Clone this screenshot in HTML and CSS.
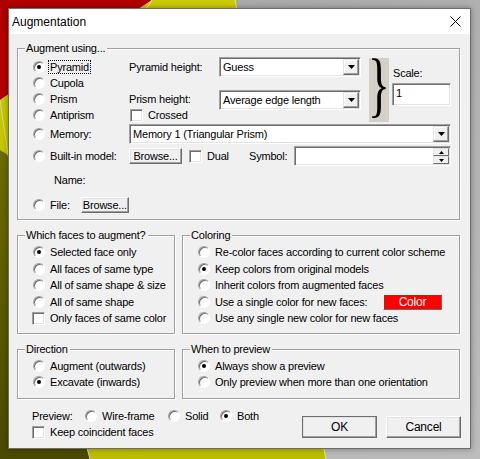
FILE: index.html
```html
<!DOCTYPE html>
<html lang="en">
<head>
    <meta charset="UTF-8">
    <title>Augmentation</title>
    <link rel="stylesheet" href="styles.css">
</head>
<body>

    <svg class="backdrop" width="480" height="459" viewBox="0 0 480 459">
        <defs>
            <linearGradient id="bgGray" x1="0" y1="0" x2="1" y2="1">
                <stop offset="0" stop-color="#a4a4a4"/>
                <stop offset="1" stop-color="#bcbcbc"/>
            </linearGradient>
            <linearGradient id="yellow" x1="0" y1="0" x2="0" y2="1">
                <stop offset="0" stop-color="#cccc00"/>
                <stop offset="1" stop-color="#bcbc00"/>
            </linearGradient>
            <linearGradient id="olive" x1="0" y1="0" x2="0" y2="1">
                <stop offset="0" stop-color="#6c6c00"/>
                <stop offset="1" stop-color="#4a4a00"/>
            </linearGradient>
        </defs>
        <rect width="480" height="459" fill="url(#bgGray)"/>
        <polygon points="0,0 152,0 0,100" fill="#b10000"/>
        <polygon points="152,0 235,0 326,459 90,459 8,155 0,150 0,100" fill="url(#yellow)"/>
        <polygon points="0,150 8,155 90,459 0,459" fill="url(#olive)"/>
        <polyline points="152,0 143,13" stroke="#e8e8a0" stroke-width="1" fill="none"/>
        <polyline points="0,100 8,155 90,459" stroke="#d8d890" stroke-width="1" fill="none"/>
        <polyline points="235,0 326,459" stroke="#e0e0c0" stroke-width="1" fill="none"/>
    </svg>

    <div class="window">
        <div class="titlebar">
            <span class="title">Augmentation</span>
            <svg class="close" width="11" height="11" viewBox="0 0 11 11">
                <path d="M0.5 0.5 L10.5 10.5 M10.5 0.5 L0.5 10.5" stroke="#000" stroke-width="1"/>
            </svg>
        </div>

        <div class="client">

            <!-- Augment using -->
            <div class="group using">
                <span class="cap">Augment using...</span>
                <div class="using-grid">
                    <div class="opt g-r1"><span class="radio on"></span><span class="focus">Pyramid</span></div>
                    <div class="opt g-r2"><span class="radio"></span><span>Cupola</span></div>
                    <div class="opt g-r3"><span class="radio"></span><span>Prism</span></div>
                    <div class="opt g-r4"><span class="radio"></span><span>Antiprism</span></div>
                    <div class="opt g-r5"><span class="radio"></span><span>Memory:</span></div>
                    <div class="opt g-r6"><span class="radio"></span><span>Built-in model:</span></div>
                    <div class="name-label">Name:</div>
                    <div class="opt g-r8">
                        <span class="radio"></span><span class="file-text">File:</span>
                        <span class="btn browse">Browse...</span>
                    </div>

                    <div class="lbl pyr-lbl">Pyramid height:</div>
                    <div class="combo pyr-combo">
                        <span class="val">Guess</span>
                        <span class="drop"><svg width="7" height="4" viewBox="0 0 7 4"><polygon points="0,0 7,0 3.5,4" fill="#000"/></svg></span>
                    </div>

                    <div class="lbl prism-lbl">Prism height:</div>
                    <div class="combo prism-combo">
                        <span class="val">Average edge length</span>
                        <span class="drop"><svg width="7" height="4" viewBox="0 0 7 4"><polygon points="0,0 7,0 3.5,4" fill="#000"/></svg></span>
                    </div>

                    <div class="opt crossed"><span class="check"></span><span>Crossed</span></div>

                    <div class="brace">
                        <svg width="20" height="64" viewBox="2 -70 44 90" preserveAspectRatio="none">
                            <text x="0" y="0" font-family="Liberation Serif, serif" font-size="100">}</text>
                        </svg>
                    </div>

                    <div class="scale">
                        <span>Scale:</span>
                        <div class="field scale-field">1</div>
                    </div>

                    <div class="combo mem-combo">
                        <span class="val">Memory 1 (Triangular Prism)</span>
                        <span class="drop"><svg width="7" height="4" viewBox="0 0 7 4"><polygon points="0,0 7,0 3.5,4" fill="#000"/></svg></span>
                    </div>

                    <div class="builtin">
                        <span class="btn browse">Browse...</span>
                        <span class="check dual-check"></span>
                        <span class="dual-text">Dual</span>
                        <span class="symbol-text">Symbol:</span>
                        <div class="field spin">
                            <span class="spin-btns">
                                <span class="spin-btn"><svg width="5" height="3" viewBox="0 0 5 3"><polygon points="0,3 5,3 2.5,0" fill="#000"/></svg></span>
                                <span class="spin-btn"><svg width="5" height="3" viewBox="0 0 5 3"><polygon points="0,0 5,0 2.5,3" fill="#000"/></svg></span>
                            </span>
                        </div>
                    </div>
                </div>
            </div>

            <div class="row2">
                <div class="group">
                    <span class="cap">Which faces to augment?</span>
                    <div class="list tall">
                        <div class="opt"><span class="radio on"></span><span>Selected face only</span></div>
                        <div class="opt"><span class="radio"></span><span>All faces of same type</span></div>
                        <div class="opt"><span class="radio"></span><span>All of same shape &amp; size</span></div>
                        <div class="opt"><span class="radio"></span><span>All of same shape</span></div>
                        <div class="opt"><span class="check"></span><span>Only faces of same color</span></div>
                    </div>
                </div>
                <div class="group">
                    <span class="cap">Coloring</span>
                    <div class="list tall">
                        <div class="opt"><span class="radio"></span><span>Re-color faces according to current color scheme</span></div>
                        <div class="opt"><span class="radio on"></span><span>Keep colors from original models</span></div>
                        <div class="opt"><span class="radio"></span><span>Inherit colors from augmented faces</span></div>
                        <div class="opt"><span class="radio"></span><span class="single-text">Use a single color for new faces:</span><span class="color-btn">Color</span></div>
                        <div class="opt"><span class="radio"></span><span>Use any single new color for new faces</span></div>
                    </div>
                </div>
            </div>

            <div class="row3">
                <div class="group">
                    <span class="cap">Direction</span>
                    <div class="list">
                        <div class="opt"><span class="radio"></span><span>Augment (outwards)</span></div>
                        <div class="opt"><span class="radio on"></span><span>Excavate (inwards)</span></div>
                    </div>
                </div>
                <div class="group">
                    <span class="cap">When to preview</span>
                    <div class="list">
                        <div class="opt"><span class="radio on"></span><span>Always show a preview</span></div>
                        <div class="opt"><span class="radio"></span><span>Only preview when more than one orientation</span></div>
                    </div>
                </div>
            </div>

            <div class="footer">
                <div class="footer-left">
                    <div class="preview-row">
                        <span class="preview-text">Preview:</span>
                        <div class="opt wire"><span class="radio"></span><span>Wire-frame</span></div>
                        <div class="opt solid"><span class="radio"></span><span>Solid</span></div>
                        <div class="opt"><span class="radio on"></span><span>Both</span></div>
                    </div>
                    <div class="opt"><span class="check"></span><span>Keep coincident faces</span></div>
                </div>
                <div class="buttons">
                    <span class="btn big default">OK</span>
                    <span class="btn big">Cancel</span>
                </div>
            </div>

        </div>
    </div>

</body>
</html>
```

FILE: styles.css
```css
body {
    margin: 0;
    width: 480px;
    height: 459px;
    overflow: hidden;
    position: relative;
    background-color: #adadad;
    font-family: "Liberation Sans", Arial, sans-serif;
    font-size: 11px;
    letter-spacing: -0.2px;
    color: #000;
}

.backdrop {
    position: absolute;
    left: 0;
    top: 0;
}

.window {
    position: relative;
    margin: 8px 0 0 8px;
    width: 463px;
    height: 441px;
    box-sizing: border-box;
    border: 1px solid #6d6d6d;
    background-color: #f0f0f0;
    box-shadow: 0 0 6px rgba(0, 0, 0, 0.35);
    display: flex;
    flex-direction: column;
}

.titlebar {
    height: 25px;
    flex: none;
    background-color: #fff;
    display: flex;
    align-items: center;
    justify-content: space-between;
    padding: 0 9px 0 3px;
}

.title {
    font-size: 12px;
    letter-spacing: 0;
}

.client {
    flex: 1;
    padding: 14px 10px 0 8px;
}

/* group boxes */
.group {
    position: relative;
    box-sizing: border-box;
    border: 1px solid #a0a0a0;
    box-shadow: 1px 1px 0 #fff, inset 1px 1px 0 #fff;
}

.cap {
    position: absolute;
    top: -7px;
    left: 7px;
    padding: 0 2px 0 1px;
    line-height: 13px;
    background-color: #f0f0f0;
}

.opt {
    display: flex;
    align-items: center;
    white-space: nowrap;
}

.radio {
    flex: none;
    position: relative;
    width: 12px;
    height: 12px;
    box-sizing: border-box;
    border-radius: 50%;
    border: 1px solid;
    border-color: #a0a0a0 #fff #fff #a0a0a0;
    background-color: #fff;
    box-shadow: inset 1px 1px 0 #6d6d6d;
    margin-right: 5px;
}

.radio.on::after {
    content: "";
    position: absolute;
    left: 3px;
    top: 3px;
    width: 4px;
    height: 4px;
    border-radius: 50%;
    background-color: #000;
}

.check {
    flex: none;
    width: 13px;
    height: 13px;
    box-sizing: border-box;
    border: 1px solid;
    border-color: #a0a0a0 #fff #fff #a0a0a0;
    background-color: #fff;
    box-shadow: inset 1px 1px 0 #6d6d6d, inset -1px -1px 0 #e3e3e3;
    margin-right: 5px;
}

.focus {
    outline: 1px dotted #000;
    padding: 0 1px;
    margin-left: -1px;
}

.btn {
    display: flex;
    align-items: center;
    justify-content: center;
    box-sizing: border-box;
    background-color: #f0f0f0;
    border: 1px solid;
    border-color: #fff #6d6d6d #6d6d6d #fff;
    box-shadow: inset -1px -1px 0 #a0a0a0, inset 1px 1px 0 #e3e3e3;
}

.field {
    box-sizing: border-box;
    background-color: #fff;
    border: 1px solid;
    border-color: #a0a0a0 #fff #fff #a0a0a0;
    box-shadow: inset 1px 1px 0 #6d6d6d, inset -1px -1px 0 #e3e3e3;
}

.combo {
    height: 20px;
    box-sizing: border-box;
    background-color: #fff;
    border: 1px solid;
    border-color: #a0a0a0 #fff #fff #a0a0a0;
    box-shadow: inset 1px 1px 0 #6d6d6d, inset -1px -1px 0 #e3e3e3;
    display: flex;
    align-items: center;
    align-self: center;
}

.combo .val {
    flex: 1;
    padding-left: 3px;
}

.combo .drop {
    width: 16px;
    height: 16px;
    margin-right: 1px;
    box-sizing: border-box;
    display: flex;
    align-items: center;
    justify-content: center;
    background-color: #f0f0f0;
    border: 1px solid;
    border-color: #e3e3e3 #6d6d6d #6d6d6d #e3e3e3;
    box-shadow: inset -1px -1px 0 #a0a0a0, inset 1px 1px 0 #fff;
}

/* augment using */
.using {
    height: 172px;
    padding: 10px 8px 0 15px;
}

.using-grid {
    display: grid;
    grid-template-columns: 96px 90px 142px 8px 20px 3px 59px;
    grid-template-rows: 16px 16px 16px 16px 21px 24px 24px 25px;
}

.using-grid .opt {
    grid-column: 1;
}

.g-r1 { grid-row: 1; }
.g-r2 { grid-row: 2; }
.g-r3 { grid-row: 3; }
.g-r4 { grid-row: 4; }
.g-r5 { grid-row: 5; }
.g-r6 { grid-row: 6; }
.g-r8 { grid-row: 8; }

.name-label {
    grid-column: 1;
    grid-row: 7;
    align-self: center;
    padding-left: 21px;
}

.file-text {
    width: 34px;
}

.g-r8 .browse {
    width: 53px;
    height: 16px;
}

.lbl {
    grid-column: 2;
    align-self: center;
}

.pyr-lbl { grid-row: 1; }
.prism-lbl { grid-row: 3; }

.pyr-combo {
    grid-column: 3;
    grid-row: 1;
}

.prism-combo {
    grid-column: 3;
    grid-row: 3;
    margin-top: 2px;
}

.using-grid .crossed {
    grid-column: 2 / 4;
    grid-row: 4;
    padding-left: 1px;
}

.brace {
    grid-column: 5;
    grid-row: 1 / 5;
    margin-top: -1px;
    background-color: #d4d0c8;
    overflow: hidden;
    height: 64px;
}

.brace svg {
    display: block;
}

.scale {
    grid-column: 7;
    grid-row: 1 / 5;
    display: flex;
    flex-direction: column;
    padding-top: 8px;
    padding-left: 1px;
}

.scale-field {
    margin-top: 4px;
    margin-left: -1px;
    height: 23px;
    padding: 3px 0 0 3px;
}

.mem-combo {
    grid-column: 2 / 8;
    grid-row: 5;
}

.builtin {
    grid-column: 2 / 8;
    grid-row: 6;
    display: flex;
    align-items: center;
    white-space: nowrap;
}

.builtin .browse {
    width: 53px;
    height: 16px;
    margin-right: 7px;
}

.dual-text {
    width: 42px;
}

.symbol-text {
    width: 45px;
}

.spin {
    flex: 1;
    height: 20px;
    display: flex;
    justify-content: flex-end;
    align-items: center;
    padding-right: 1px;
}

.spin-btns {
    display: flex;
    flex-direction: column;
}

.spin-btn {
    width: 16px;
    height: 8px;
    box-sizing: border-box;
    display: flex;
    align-items: center;
    justify-content: center;
    background-color: #f0f0f0;
    border: 1px solid;
    border-color: #e3e3e3 #6d6d6d #6d6d6d #e3e3e3;
}

/* lower groups */
.row2 {
    margin-top: 15px;
    display: grid;
    grid-template-columns: 158px 278px;
    column-gap: 7px;
    height: 99px;
}

.row3 {
    margin-top: 15px;
    display: grid;
    grid-template-columns: 158px 278px;
    column-gap: 7px;
    height: 50px;
}

.list {
    display: flex;
    flex-direction: column;
    padding: 8px 0 0 15px;
}

.list .opt {
    height: 16px;
}

.list.tall .opt {
    height: 16.5px;
}

.list .check {
    margin-left: -1px;
}

.single-text {
    width: 168px;
}

.color-btn {
    width: 59px;
    height: 16px;
    box-sizing: border-box;
    display: flex;
    align-items: center;
    justify-content: center;
    background-color: #ff0000;
    color: #fff;
    font-size: 12px;
    border: 1px solid;
    border-color: #fff #6d6d6d #6d6d6d #fff;
}

/* footer */
.footer {
    display: flex;
    justify-content: space-between;
    margin-right: -1px;
}

.footer-left {
    padding: 9px 0 0 15px;
}

.preview-row {
    display: flex;
    align-items: center;
    height: 16px;
}

.footer-left > .opt {
    height: 16px;
}

.preview-text {
    width: 53px;
}

.preview-row .wire {
    width: 83px;
}

.preview-row .solid {
    width: 52px;
}

.buttons {
    display: flex;
    gap: 9px;
    padding-top: 17px;
}

.btn.big {
    width: 75px;
    height: 22px;
    font-size: 12px;
}

.btn.default {
    border-color: #fff #555 #555 #fff;
    outline: 1px solid #6d6d6d;
    outline-offset: -1px;
}
```
